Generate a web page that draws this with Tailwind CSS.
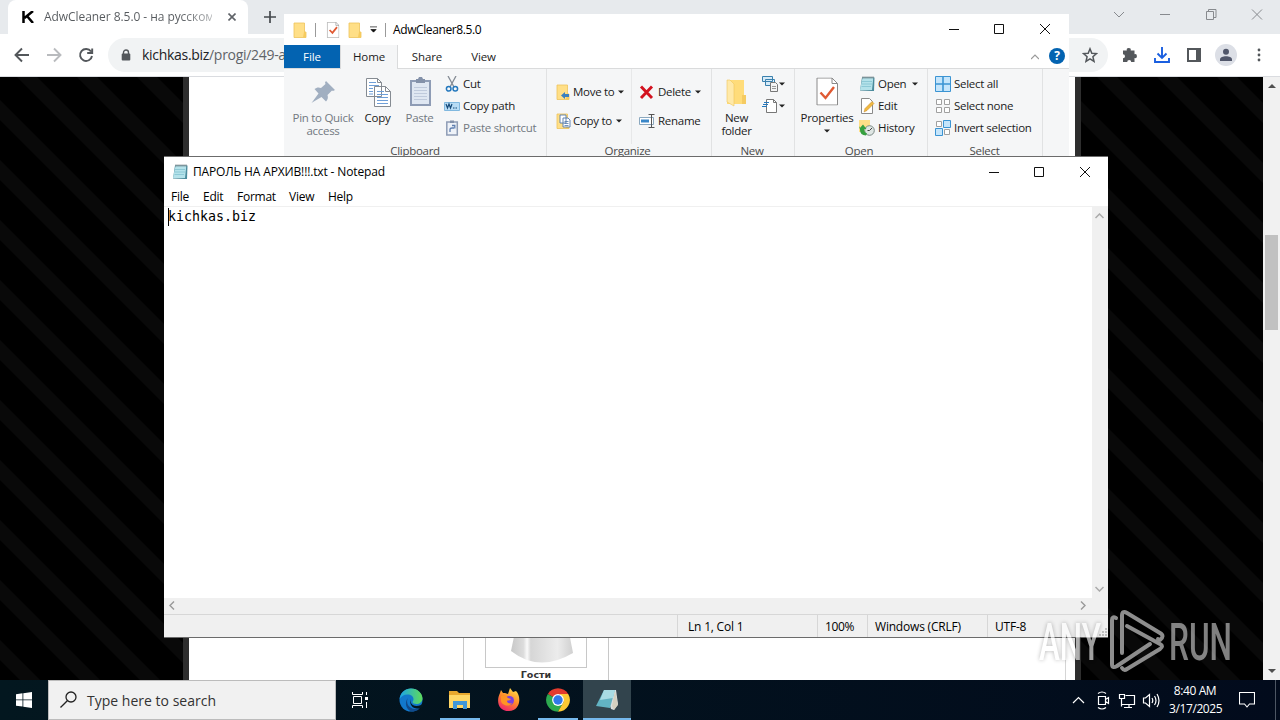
<!DOCTYPE html>
<html lang="en">
<head>
<meta charset="UTF-8">
<title>Desktop</title>
<script src="https://cdn.jsdelivr.net/npm/@tailwindcss/browser@4"></script>
</head>
<body class="relative w-[1280px] h-[720px] overflow-hidden bg-black font-['Open_Sans','Noto_Sans',sans-serif] text-[11.5px] leading-[14px] text-[#1b1b1b]">

<!-- shared symbols -->
<svg class="hidden">
    <symbol id="folder" viewBox="0 0 16 16">
        <path d="M2 1h10.500v9H14v5.500H2z" fill="#ffdf87" stroke="#edc35a" stroke-width=".8"/>
        <path d="M12 10h2v5.500h-3z" fill="#f6cb5e"/>
    </symbol>
    <symbol id="note" viewBox="0 0 16 16">
        <path d="M3 1.500h12.500l-.5 13.500H13L1 14.500z" fill="#4b8b9c"/>
        <path d="M3.500 2h10.800L13 14H1z" fill="#b4e2ea"/>
        <path d="M3 5.500h10M3 8h10M2.500 10.500H12" stroke="#83c3d0" stroke-width=".8"/>
        <path d="M4 .5v2M6 .5v2M8 .5v2M10 .5v2M12 .5v2M14 .5v2" stroke="#4c5c62" stroke-width=".9"/>
    </symbol>
    <symbol id="caret" viewBox="0 0 6 4"><path d="M0 .5h6l-3 3z" fill="#222"/></symbol>
    <symbol id="page" viewBox="0 0 22 28">
        <path d="M1 .5h15l5.500 5.500v21.500H1z" fill="#fff" stroke="#8a8a8a"/>
        <path d="M16 .5V6h5.500" fill="none" stroke="#8a8a8a"/>
    </symbol>
</svg>

<!-- browser -->
<div class="absolute left-0 top-0 w-[1280px] h-[680px] flex flex-col bg-white">
    <div class="h-[34px] shrink-0 bg-[#e7eaed] flex">
        <div class="ml-2 w-[240px] bg-white rounded-t-lg flex items-center pl-[14px]">
            <svg class="w-3 h-3" viewBox="0 0 12 12"><path d="M1.500 0v12M11 0 2.500 7M5 5l6 7" fill="none" stroke="#000" stroke-width="2.500"/></svg>
            <span class="ml-[10px] w-[168px] whitespace-nowrap text-[12px] tracking-[-0.06px] bg-gradient-to-r from-[#55595d] from-80% to-[#b5b7b9] bg-clip-text text-transparent">AdwCleaner 8.5.0 - на русском</span>
            <svg class="ml-4 w-2 h-2" viewBox="0 0 8 8"><path d="m.5.5 7 7m0-7-7 7" stroke="#5f6368" stroke-width="1.600"/></svg>
        </div>
        <svg class="ml-4 mt-[11px] w-3 h-3" viewBox="0 0 12 12"><path d="M6 0v12M0 6h12" stroke="#45494d" stroke-width="1.700"/></svg>
        <svg class="ml-auto mr-[17px] mt-2 w-[150px] h-3" viewBox="0 0 150 12" fill="none" stroke="#878a8e">
            <path d="m1 4 5 5 5-5M47 6.500h10M93.500 3.500h7v8h-7zM95.500 3.500v-2h7.500v8h-2.500M139 1.500l10 10m0-10-10 10"/>
        </svg>
    </div>
    <div class="h-[43px] shrink-0 bg-white border-b border-[#dadce0] flex items-center">
        <svg class="ml-3.5 w-20 h-5" viewBox="0 0 80 20" fill="none" stroke-width="1.900">
            <path d="M15 10H2M8 3.500 1.500 10 8 16.500" stroke="#53575b"/>
            <path d="M33 10h13M40 3.500l6.500 6.500-6.500 6.500" stroke="#b9bbbe"/>
            <path d="M77 6.500A6 6 0 1 0 78 11M78.200 3.500V8h-5" stroke="#53575b"/>
        </svg>
        <div class="ml-3.5 w-[1000px] h-[34px] rounded-full bg-[#f1f3f4] flex items-center">
            <svg class="ml-[13px] w-[10px] h-3" viewBox="0 0 10 12"><path d="M2.500 5V3.500a2.500 2.500 0 0 1 5 0V5" fill="none" stroke="#53575b" stroke-width="1.400"/><rect x=".7" y="4.500" width="8.600" height="7" rx="1" fill="#53575b"/></svg>
            <span class="ml-[11px] text-[14px] leading-5 whitespace-nowrap text-[#5f6368] tracking-[-0.3px]"><span class="text-[#202124]">kichkas.biz</span>/progi/249-a</span>
            <svg class="ml-auto mr-[10px] w-4 h-4" viewBox="0 0 16 16"><path d="m8 1.800 1.800 4.400 4.700.4-3.600 3.100 1.100 4.600L8 11.800l-4 2.500 1.100-4.600L1.500 6.600l4.700-.4z" fill="none" stroke="#53575b" stroke-width="1.500"/></svg>
        </div>
        <svg class="ml-[14px] w-4 h-4" viewBox="0 0 16 16"><path d="M1 3.500h3.800a2 2 0 1 1 3.900 0H12.500v3.700a2 2 0 1 1 0 3.900V15H9.200a2 2 0 0 0-4 0H1v-3.700a2 2 0 0 0 0-4z" fill="#53575b"/></svg>
        <svg class="ml-4 w-4 h-4" viewBox="0 0 16 16"><path d="M8 0v10.500M3.500 6.500 8 11l4.500-4.500M1 11v4h14v-4" fill="none" stroke="#1a5fe0" stroke-width="1.900"/></svg>
        <svg class="ml-[17px] w-[14px] h-[14px]" viewBox="0 0 14 14"><path d="M1 1h12v12H1z" fill="none" stroke="#53575b" stroke-width="2"/><path d="M9 1h4v12H9z" fill="#53575b"/></svg>
        <svg class="ml-[14px] w-[22px] h-[22px]" viewBox="0 0 22 22"><circle cx="11" cy="11" r="11" fill="#dcdfe6"/><circle cx="11" cy="7.800" r="3" fill="#50566a"/><path d="M5 17v-1.500c0-2 3-3.200 6-3.200s6 1.200 6 3.200V17z" fill="#50566a"/></svg>
        <svg class="ml-5 w-1 h-4" viewBox="0 0 4 16" fill="#53575b"><circle cx="2" cy="3" r="1.400"/><circle cx="2" cy="8" r="1.400"/><circle cx="2" cy="13" r="1.400"/></svg>
    </div>
    <div class="grow flex">
        <div class="relative w-[1263px] flex bg-black">
            <svg class="absolute inset-0 w-full h-full">
                <!-- y offset keeps the 60px tile aligned with the window origin -->
                <pattern id="stripes" width="60" height="60" patternUnits="userSpaceOnUse" patternTransform="translate(0 -17)">
                    <path d="M0 40 20 60H0zM0 0h20l40 40v20z" fill="#090909"/>
                </pattern>
                <rect width="1263" height="603" fill="url(#stripes)"/>
            </svg>
            <div class="relative ml-[183px] w-[898px] bg-white border-x-[6px] border-[#2e2e2e] flex">
                <div class="ml-[274px] w-[146px] border-x border-[#c8c8c8] flex flex-col items-center justify-end">
                    <div class="w-[102px] h-[102px] border border-[#c8c8c8] flex items-end justify-center">
                        <svg class="w-[72px] h-[60px] ml-[16px]" viewBox="0 0 72 60">
                            <defs><linearGradient id="bust"><stop offset="0" stop-color="#c8c8c8"/><stop offset=".2" stop-color="#dcdcdc"/><stop offset=".26" stop-color="#fafafa"/><stop offset=".32" stop-color="#d6d6d6"/><stop offset=".75" stop-color="#ececec"/><stop offset="1" stop-color="#d0d0d0"/></linearGradient></defs>
                            <path d="M8 20 3 44q28 22 62 2L60 20z" fill="url(#bust)"/>
                        </svg>
                    </div>
                    <div class="h-3 leading-[14px] font-bold text-[9.500px] font-['DejaVu_Sans',sans-serif] text-[#333]">Гости</div>
                </div>
                <div class="ml-[456px] w-px bg-[#d5d5d5]"></div>
            </div>
        </div>
        <div class="w-[17px] bg-[#f1f1f1] flex flex-col items-center">
            <svg class="mt-[7px] w-2 h-1" viewBox="0 0 8 4"><path d="m0 4 4-4 4 4z" fill="#505050"/></svg>
            <div class="mt-[147px] w-[13px] h-[95px] bg-[#c1c1c1]"></div>
            <svg class="mt-auto mb-[7px] w-2 h-1" viewBox="0 0 8 4"><path d="m0 0 4 4 4-4z" fill="#505050"/></svg>
        </div>
    </div>
</div>

<!-- file explorer -->
<div class="absolute left-[284px] top-[14px] w-[785px] h-[143px] bg-white flex flex-col">
    <div class="h-[31px] shrink-0 flex items-center">
        <svg class="ml-2 w-4 h-4"><use href="#folder"/></svg>
        <div class="ml-[7px] w-px h-[14px] bg-[#9a9a9a]"></div>
        <svg class="ml-[10px] w-[14px] h-4" viewBox="0 0 22 28"><use href="#page"/><path d="m5 14 5 5 8-10" fill="none" stroke="#e05a33" stroke-width="3"/></svg>
        <svg class="ml-[7px] w-4 h-4"><use href="#folder"/></svg>
        <svg class="ml-[7px] w-[7px] h-[7px]" viewBox="0 0 8 8"><path d="M0 1h8M1 4h6L4 7z" fill="#111" stroke="#111" stroke-width=".8"/></svg>
        <div class="ml-2 w-px h-[14px] bg-[#9a9a9a]"></div>
        <span class="ml-[7px] text-black text-[12px] tracking-[-0.4px]">AdwCleaner8.5.0</span>
        <svg class="ml-auto mr-[18px] mb-[2px] w-[102px] h-3" viewBox="0 0 102 12" fill="none" stroke="#111"><path d="M0 6.500h10M45.500 1.500h9v9h-9zM91 1l10 10m0-10L91 11"/></svg>
    </div>
    <div class="h-6 shrink-0 border-b border-[#dadbdc] flex text-center leading-6 tracking-[-0.1px]">
        <div class="w-14 h-[23px] bg-[#0363b1] text-white">File</div>
        <div class="w-[58px] h-6 bg-[#f5f6f7] border-x border-[#dadbdc]">Home</div>
        <div class="w-[58px]">Share</div>
        <div class="w-[55px]">View</div>
        <svg class="ml-auto mt-2 w-2 h-2" viewBox="0 0 8 8"><path d="m0 6 4-4 4 4" fill="none" stroke="#999" stroke-width="1.200"/></svg>
        <div class="ml-[10px] mr-1 mt-[3px] w-4 h-4 rounded-full bg-[#0363b1] text-white font-bold leading-4 text-[12px]">?</div>
    </div>
    <div class="grow bg-[#f5f6f7] flex whitespace-nowrap tracking-[-0.28px]">
        <div class="w-[263px] border-r border-[#e1e2e3] flex flex-col">
            <div class="h-[75px] flex">
                <div class="w-[77px] pl-px pt-2 flex flex-col items-center text-center text-[#727981] leading-[13px]">
                    <svg class="w-8 h-8 shrink-0" viewBox="0 0 32 32"><path d="m19 4 9 9-2 1-1-.5-4.500 4.500c1 3 0 5-1.500 6.500l-4.500-4.500L6 25l-1.500 1L6 24l5.500-7.500L7.500 12c2-1.500 4-2 6.500-1l4.500-4-.500-1.500z" fill="#a1afc1"/></svg>
                    <span class="mt-[2px]">Pin to Quick<br>access</span>
                </div>
                <div class="w-[33px] pt-2 flex flex-col items-center leading-[13px]">
                    <svg class="w-8 h-8 shrink-0" viewBox="0 0 32 32"><path d="M4.500 1.500h11l4 4v14h-15zM12.500 9.500h11l5 5v15h-16z" fill="#fff" stroke="#858b92"/><path d="M15.500 1.500v4h4M23.500 9.500v5h5" fill="none" stroke="#858b92"/><path d="M7 5.500h7M7 8.500h10M7 11.500h4M7 14.500h4M7 17h4M15 14.500h7M15 17.500h11M15 20.500h11M15 23.500h11M15 26.500h11" stroke="#6f9fd8"/></svg>
                    <span class="mt-[2px]">Copy</span>
                </div>
                <div class="w-[50px] pl-px pt-2 flex flex-col items-center text-[#727981] leading-[13px]">
                    <svg class="w-8 h-8 shrink-0" viewBox="0 0 32 32"><path d="M7 4h19v24H7z" fill="#dfe7f2" stroke="#8e9cb5" stroke-width="2"/><path d="M12 2h2l1-2h3l1 2h2v4h-9z" fill="#8391a9"/><path d="M10 10.500h13M10 13.500h13M10 16.500h13M10 19.500h13M10 22.500h13" stroke="#bfcadc"/></svg>
                    <span class="mt-[2px]">Paste</span>
                </div>
                <div class="pt-1 flex flex-col">
                    <div class="h-[22px] flex items-center gap-[3px]">
                        <svg class="w-4 h-4" viewBox="0 0 16 16" fill="none"><path d="m4 0 6 11M12 0 6 11" stroke="#848b94" stroke-width="1.300"/><circle cx="4.700" cy="12.800" r="2.300" stroke="#2478bd" stroke-width="1.500"/><circle cx="11.300" cy="12.800" r="2.300" stroke="#2478bd" stroke-width="1.500"/></svg>
                        <span>Cut</span>
                    </div>
                    <div class="h-[22px] flex items-center gap-[3px]">
                        <svg class="w-4 h-4" viewBox="0 0 16 16"><path d="M.5 4.500h15v8H.5z" fill="#b8dcf5" stroke="#80b8df"/><path d="m2 6 1.500 4L5 6l1.500 4L8 6M9 10h1.500M11.500 10H13" fill="none" stroke="#164a79" stroke-width="1.200"/></svg>
                        <span>Copy path</span>
                    </div>
                    <div class="h-[22px] flex items-center gap-[3px] text-[#727981]">
                        <svg class="w-4 h-4" viewBox="0 0 16 16"><path d="M2.800 2h10.500v13H2.800z" fill="#eef2f8" stroke="#8e9cb5" stroke-width="1.500"/><path d="M6 .5h4v2.500H6z" fill="#8391a9"/><path d="M6 12V9.500Q6 8 8 8h2M8 5.500h2.800v3" fill="none" stroke="#5f7fb0" stroke-width="1.300"/></svg>
                        <span>Paste shortcut</span>
                    </div>
                </div>
            </div>
            <div class="text-center text-[#4a4a4a]">Clipboard</div>
        </div>
        <div class="w-[165px] border-r border-[#e1e2e3] flex flex-col">
            <div class="h-[75px] flex">
                <div class="w-[85px] pl-2 pt-2 flex flex-col border-r border-[#e7e8e9]">
                    <div class="h-[29px] flex items-center">
                        <svg class="w-4 h-4" viewBox="0 0 16 16"><use href="#folder"/><path d="M6 11.500 10 8v2h4v3h-4v2z" fill="#3a80bf"/></svg>
                        <span class="ml-[2px] w-[45px]">Move to</span><svg class="w-[6px] h-1"><use href="#caret"/></svg>
                    </div>
                    <div class="h-[29px] flex items-center">
                        <svg class="w-4 h-4" viewBox="0 0 16 16"><use href="#folder"/><path d="M5 2h6v8H5zM8 5h5l2 2v7H8z" fill="#fff" stroke="#5279aa" stroke-width=".9"/><path d="M9.500 8.500h4M9.500 10.500h4M9.500 12.500h4" stroke="#5279aa" stroke-width=".8"/></svg>
                        <span class="ml-[2px] w-[43px]">Copy to</span><svg class="w-[6px] h-1"><use href="#caret"/></svg>
                    </div>
                </div>
                <div class="pl-[7px] pt-2 flex flex-col">
                    <div class="h-[29px] flex items-center">
                        <svg class="w-4 h-4" viewBox="0 0 16 16"><path d="m2 2.500 11 11.500M13 2.500 2 14" stroke="#d3121f" stroke-width="2.900"/></svg>
                        <span class="ml-[3px] w-[37px]">Delete</span><svg class="w-[6px] h-1"><use href="#caret"/></svg>
                    </div>
                    <div class="h-[29px] flex items-center">
                        <svg class="w-4 h-4" viewBox="0 0 16 16"><path d="M.5 4.500h14v7H.5z" fill="#fff" stroke="#8ba8bf"/><path d="M2 6.500h8v3H2z" fill="#3a87c8"/><path d="M9.500 1.500h6M9.500 14.500h6M12.500 1.500v13" stroke="#555"/></svg>
                        <span class="ml-[3px]">Rename</span>
                    </div>
                </div>
            </div>
            <div class="text-center pr-[3px] text-[#4a4a4a]">Organize</div>
        </div>
        <div class="w-[83px] border-r border-[#e1e2e3] flex flex-col">
            <div class="h-[75px] flex">
                <div class="w-[49px] pt-2 flex flex-col items-center text-center leading-[13px]">
                    <svg class="w-8 h-8 shrink-0" viewBox="0 0 32 32"><path d="M6 3h17v18h2v6H6z" fill="#ffdc7a"/><path d="M6 3h3l4 4v22l-7-4z" fill="#ffe9a8" stroke="#efc65c" stroke-width=".6"/><path d="M21 18h4v9h-4z" fill="#f5cb62"/></svg>
                    <span class="mt-[2px]">New<br>folder</span>
                </div>
                <div class="pt-1 pl-px flex flex-col">
                    <div class="h-[22px] flex items-center gap-px">
                        <svg class="w-4 h-4" viewBox="0 0 16 16"><path d="M.5.500h10v5H.5zM3.500 3.500h9v6h-9z" fill="#d7ebf8" stroke="#3a80ad"/><path d="M8.500 6.500h5l2 2v7h-7z" fill="#f4f4f4" stroke="#777"/><path d="M10 10.500h4M10 12.500h4" stroke="#999"/></svg>
                        <svg class="w-[6px] h-1"><use href="#caret"/></svg>
                    </div>
                    <div class="h-[22px] flex items-center gap-px">
                        <svg class="w-4 h-4" viewBox="0 0 16 16"><path d="M4.500 1.500h7l3 3v10h-10z" fill="#fff" stroke="#777"/><path d="M11.500 1.500v3h3" fill="none" stroke="#777"/><path d="M2 4.500h5M1 6.500h5M0 8.500h5" stroke="#2478bd" stroke-width="1.200"/></svg>
                        <svg class="w-[6px] h-1"><use href="#caret"/></svg>
                    </div>
                </div>
            </div>
            <div class="text-center pr-[2px] text-[#4a4a4a]">New</div>
        </div>
        <div class="w-[133px] border-r border-[#e1e2e3] flex flex-col">
            <div class="h-[75px] flex">
                <div class="w-16 pt-2 flex flex-col items-center leading-[13px]">
                    <svg class="w-[22px] h-[29px] mb-[3px] shrink-0" viewBox="0 0 22 28"><use href="#page"/><path d="m4.500 15 5 5.500 8.500-11" fill="none" stroke="#e05a33" stroke-width="2.400"/></svg>
                    <span class="mt-[2px]">Properties</span>
                    <svg class="mt-[5px] w-[6px] h-1 shrink-0"><use href="#caret"/></svg>
                </div>
                <div class="pt-1 flex flex-col">
                    <div class="h-[22px] flex items-center gap-[3px]">
                        <svg class="w-4 h-4"><use href="#note"/></svg>
                        <span class="w-[31px]">Open</span><svg class="w-[6px] h-1"><use href="#caret"/></svg>
                    </div>
                    <div class="h-[22px] flex items-center gap-[3px]">
                        <svg class="w-4 h-4" viewBox="0 0 16 16"><path d="M2.500.500h8l3 3v12h-11z" fill="#fff" stroke="#8a8a8a"/><path d="m5 14 1-3.500 7-7 2 2-7 7z" fill="#f0b840" stroke="#c78a2a" stroke-width=".5"/></svg>
                        <span>Edit</span>
                    </div>
                    <div class="h-[22px] flex items-center gap-[3px]">
                        <svg class="w-4 h-4" viewBox="0 0 16 16"><path d="M0 0h11v12H0z" fill="#ffdf87"/><circle cx="10.500" cy="10.500" r="4.800" fill="#dfe6e4" stroke="#7b8a86"/><path d="M10.500 10.500 13 8M10.500 10.500h-2" stroke="#444"/><path d="M1 6v4q0 5 6 5.500l1-2Q5 12 5 9h2.500L4 4.500 0 9z" fill="#35a03f"/></svg>
                        <span>History</span>
                    </div>
                </div>
            </div>
            <div class="text-center pr-1 text-[#4a4a4a]">Open</div>
        </div>
        <div class="w-[115px] border-r border-[#e1e2e3] flex flex-col">
            <div class="h-[75px] pl-[7px] pt-1 flex flex-col">
                <div class="h-[22px] flex items-center gap-[3px]">
                    <svg class="w-4 h-4" viewBox="0 0 16 16"><path d="M.5.500h15v15H.5z" fill="#c5e5fb" stroke="#3b94d3"/><path d="M8 0v16M0 8h16" stroke="#3b94d3" stroke-width="1.600"/></svg>
                    <span>Select all</span>
                </div>
                <div class="h-[22px] flex items-center gap-[3px]">
                    <svg class="w-4 h-4" viewBox="0 0 16 16"><path d="M1.500 1.500h5v5h-5zM9.500 1.500h5v5h-5zM1.500 9.500h5v5h-5zM9.500 9.500h5v5h-5z" fill="#fff" stroke="#a0a0a0"/></svg>
                    <span>Select none</span>
                </div>
                <div class="h-[22px] flex items-center gap-[3px]">
                    <svg class="w-4 h-4" viewBox="0 0 16 16"><path d="M1.500 1.500h5v5h-5zM9.500 9.500h5v5h-5z" fill="#fff" stroke="#a0a0a0"/><path d="M8.500.500h7v7h-7zM.5 8.500h7v7h-7z" fill="#c5e5fb" stroke="#3b94d3"/></svg>
                    <span>Invert selection</span>
                </div>
            </div>
            <div class="text-center pr-px text-[#4a4a4a]">Select</div>
        </div>
    </div>
</div>

<!-- notepad -->
<div class="absolute left-[164px] top-[156px] w-[944px] h-[482px] bg-white border-y border-[#6b6b6b] flex flex-col text-black text-[12px]">
    <div class="h-[30px] shrink-0 flex items-center pb-px">
        <svg class="ml-2 w-4 h-4"><use href="#note"/></svg>
        <span class="ml-[5px] tracking-[-0.14px]">ПАРОЛЬ НА АРХИВ!!!.txt - Notepad</span>
        <svg class="ml-auto mr-[17px] w-[102px] h-3" viewBox="0 0 102 12" fill="none" stroke="#111"><path d="M0 6.500h10M45.500 1.500h9v9h-9zM91 1l10 10m0-10L91 11"/></svg>
    </div>
    <div class="h-5 shrink-0 border-b border-[#f0f0f0] flex pl-[7px] leading-5 tracking-[-0.25px]">
        <span class="w-8">File</span><span class="w-[34px]">Edit</span><span class="w-[52px]">Format</span><span class="w-[39px]">View</span><span>Help</span>
    </div>
    <div class="grow flex">
        <div class="grow flex items-start pt-px pl-1">
            <div class="w-px h-[18px] bg-black"></div>
            <span class="ml-[-1px] leading-[17px] text-[13.300px] font-['DejaVu_Sans_Mono','Liberation_Mono',monospace]">kichkas.biz</span>
        </div>
        <div class="w-4 bg-[#f0f0f0] flex flex-col items-center justify-between py-1 pr-px">
            <svg class="mt-[2px] w-[9px] h-[6px]" viewBox="0 0 9 6"><path d="m.5 5 4-4 4 4" fill="none" stroke="#aaa" stroke-width="1.500"/></svg>
            <svg class="mb-[2px] w-[9px] h-[6px]" viewBox="0 0 9 6"><path d="m.5 1 4 4 4-4" fill="none" stroke="#aaa" stroke-width="1.500"/></svg>
        </div>
    </div>
    <div class="h-4 shrink-0 bg-[#f0f0f0] flex items-center justify-between pl-[5px] pr-[22px] pb-px">
        <svg class="w-[6px] h-[9px]" viewBox="0 0 6 9"><path d="m5 .5-4 4 4 4" fill="none" stroke="#999" stroke-width="1.400"/></svg>
        <svg class="w-[6px] h-[9px]" viewBox="0 0 6 9"><path d="m1 .5 4 4-4 4" fill="none" stroke="#999" stroke-width="1.400"/></svg>
    </div>
    <div class="h-[23px] shrink-0 bg-[#f0f0f0] border-t border-[#d7d7d7] flex leading-[23px] tracking-[-0.2px]">
        <div class="w-[513px]"></div>
        <div class="w-[140px] border-l border-[#d7d7d7] pl-[10px]">Ln 1, Col 1</div>
        <div class="w-[50px] border-l border-[#d7d7d7] pl-[7px] tracking-[-0.4px]">100%</div>
        <div class="w-[120px] border-l border-[#d7d7d7] pl-[7px]">Windows (CRLF)</div>
        <div class="grow border-l border-[#d7d7d7] pl-[7px]">UTF-8</div>
        <svg class="self-end mr-px mb-px w-2 h-2" viewBox="0 0 8 8"><path d="M6 0h2v2H6zM3 3h2v2H3zM6 3h2v2H6zM0 6h2v2H0zM3 6h2v2H3zM6 6h2v2H6z" fill="#bfbfbf"/></svg>
    </div>
</div>

<!-- watermark -->
<svg class="absolute left-[1030px] top-[600px] w-[220px] h-20" viewBox="0 0 220 80" fill="none">
    <g font-family="Roboto, sans-serif" font-size="52" font-weight="500" fill="#fff">
        <text x="9" y="59.500" textLength="62" lengthAdjust="spacingAndGlyphs" opacity=".62" class="drop-shadow-[0_0_2px_rgba(0,0,0,0.45)]">ANY</text>
        <text x="139" y="59.500" textLength="63" lengthAdjust="spacingAndGlyphs" opacity=".5">RUN</text>
    </g>
    <g stroke="#8d8d8d" stroke-width="4" stroke-linecap="round" stroke-linejoin="round">
        <path d="M86 18q-4-2-4 2v44q0 5 5 2l33-22"/>
        <path d="M92 53V16q0-6 5-3l33 20q5 3 0 7l-2-1"/>
        <path d="M97 26l33 18q4 2 0 5L97 69q-3 2-5-1"/>
    </g>
</svg>

<!-- taskbar -->
<div class="absolute left-0 top-[680px] w-[1280px] h-10 flex bg-gradient-to-r from-[#03171f] to-[#020b1c] text-white">
    <div class="w-12 flex items-center justify-center">
        <svg class="w-4 h-4" viewBox="0 0 16 16" fill="#fff"><path d="M0 2.200 6.500 1.300v6.200H0zM7.300 1.200 16 0v7.500H7.300zM0 8.300h6.500v6.300L0 13.800zM7.300 8.300H16V16l-8.700-1.200z"/></svg>
    </div>
    <div class="w-[288px] bg-[#f1f1f1] border border-[#bcbcbc] flex items-center">
        <svg class="ml-[11px] w-[18px] h-[18px]" viewBox="0 0 18 18" fill="none" stroke="#222" stroke-width="1.300"><circle cx="11" cy="6" r="5"/><path d="M7.300 9.700.5 16.500"/></svg>
        <span class="ml-[9px] pt-px text-[14px] text-[#333] tracking-[0.01px]">Type here to search</span>
    </div>
    <div class="w-12 flex items-center justify-center">
        <svg class="w-4 h-4" viewBox="0 0 16 16" fill="none" stroke="#fff"><path d="M.5 0v2.500h10V0M.5 16v-2.500h10V16M1.500 4.500h8v7h-8zM14.500 0v3M14.500 10v6"/><path d="M13 5h3v3h-3z" fill="#fff" stroke="none"/></svg>
    </div>
    <div class="w-[52px] pl-[2px] flex items-center justify-center">
        <svg class="w-6 h-6" viewBox="0 0 24 24">
            <defs><linearGradient id="edge"><stop offset="0" stop-color="#1ba4e8"/><stop offset="1" stop-color="#5fdb5a"/></linearGradient></defs>
            <circle cx="12" cy="12" r="11.500" fill="#1278cc"/>
            <path d="M.6 11C1.500 4.500 6.500.500 12 .500c7 0 11.500 5 11.500 10 0 3.500-3 5.500-6 5.500-2.500 0-4-1-4-2 0-.7 1-1 1-2.700C14.500 8.500 12 6.500 8.500 6.500 5 6.500 2 8.500.6 11z" fill="url(#edge)"/>
            <path d="M9 10c-2.500 4 0 11 7.500 11 3 0 4.500-1 5.500-2-2 3-5.500 4.500-9 4.500C7 22.500 5 14 9 10z" fill="#114a8b"/>
            <path d="M12 10.500c-1.500 3 .5 7.500 5.500 7.500 3 0 5-1 6.500-2.500V19l-2 1c-2 1-4 .5-5.500.3-4.500-.8-6.500-6.300-4.500-9.800z" fill="#03171f"/>
        </svg>
    </div>
    <div class="w-[48px] flex items-center justify-center">
        <svg class="w-[22px] h-5" viewBox="0 0 22 20"><path d="M0 1h8l2 2h11v15H0z" fill="#e8a82e"/><path d="M0 5h21v13H0z" fill="#ffd766"/><path d="M4 11h14v8h-4v-4H8v4H4z" fill="#3f97d9"/></svg>
    </div>
    <div class="w-[50px] flex items-center justify-center">
        <svg class="w-6 h-6" viewBox="0 0 24 24">
            <defs><linearGradient id="fox" x1=".8" y1="0" x2=".3" y2="1"><stop offset="0" stop-color="#ffe14a"/><stop offset=".5" stop-color="#ff8a2a"/><stop offset="1" stop-color="#f0256c"/></linearGradient></defs>
            <path d="M3 5l1-3 2 3 2 0 3 1 2-6 3 4 3-1c6 6 4 20-7 20C1 23-1 13 3 5z" fill="url(#fox)"/>
            <circle cx="12.500" cy="12.500" r="4.500" fill="#7a3fe0"/>
            <path d="M4 8c3-1 5 0 7 2l3 1c-1 2-3 1-4 2 0 2 3 3 5 2-2 4-10 3-11-2z" fill="#ff9524"/>
        </svg>
    </div>
    <div class="w-[48px] flex items-center justify-center">
        <svg class="w-6 h-6" viewBox="0 0 24 24"><path d="M12 12 1.800 6A11.800 11.800 0 0 1 22.200 6z" fill="#e33b2e"/><path d="M1.800 6A11.800 11.800 0 0 0 12 23.800L17.100 15z" fill="#2da94f"/><path d="M22.200 6A11.800 11.800 0 0 1 12 23.800L17.500 14 14 6z" fill="#fcc934"/><circle cx="12" cy="12" r="5.900" fill="#fff"/><circle cx="12" cy="12" r="4.700" fill="#3079ea"/></svg>
    </div>
    <div class="ml-px w-[48px] flex items-center justify-center bg-[#32444d]">
        <svg class="w-[22px] h-[22px]" viewBox="0 0 22 22"><path d="M9 1h11l2 14-4 6-3-1z" fill="#d9dfe0"/><path d="M8 1h11l-5 18L0 17z" fill="#62b3c3"/><path d="M8 1h11l-2 8L4 11z" fill="#a9dce4"/><path d="m19 2 3 14-4 5-2-4z" fill="#d4d0c0"/></svg>
    </div>
    <svg class="ml-auto mr-[9px] self-center w-[88px] h-5" viewBox="0 0 88 20" fill="none" stroke="#fff" stroke-width="1.200">
        <path d="m1 13 5.500-5.500L12 13"/>
        <path d="M26.500 6.500h7v8h-7zM33.500 9.500l3-2v6l-3-2M26 3.500q4-3 8 0M26 17.500q4 3 8 0"/>
        <path d="M53.500 5.500h9v9h-13v-4M47.500 4.500h5v4h-5zM49.500 8.500v8M57 15v3M52 17.500h8"/>
        <path d="M71.500 8v5h2l4 3.500V4.500L73.500 8zM80 8q1.500 2.500 0 5M82.500 6q3 4.500 0 9M85 4q4 6.500 0 13"/>
    </svg>
    <div class="w-[52px] text-center text-[12px] leading-[18px] pt-[2px] tracking-[-0.4px] whitespace-nowrap">8:40 AM<br>3/17/2025</div>
    <svg class="ml-[18px] mr-[20px] self-center w-4 h-4" viewBox="0 0 16 16" fill="none" stroke="#fff" stroke-width="1.100"><path d="M.5.500h15v11.500h-5l-2.500 3-2.500-3h-5z"/></svg>
    <div class="w-px bg-[#4d5663] mr-[4px]"></div>
</div>

<!-- taskbar running markers -->
<div class="absolute left-[440px] top-[718px] w-10 h-[2px] bg-[#76b9ed]"></div>
<div class="absolute left-[538px] top-[718px] w-10 h-[2px] bg-[#76b9ed]"></div>
<div class="absolute left-[583px] top-[718px] w-12 h-[2px] bg-[#76b9ed]"></div>
</body>
</html>
